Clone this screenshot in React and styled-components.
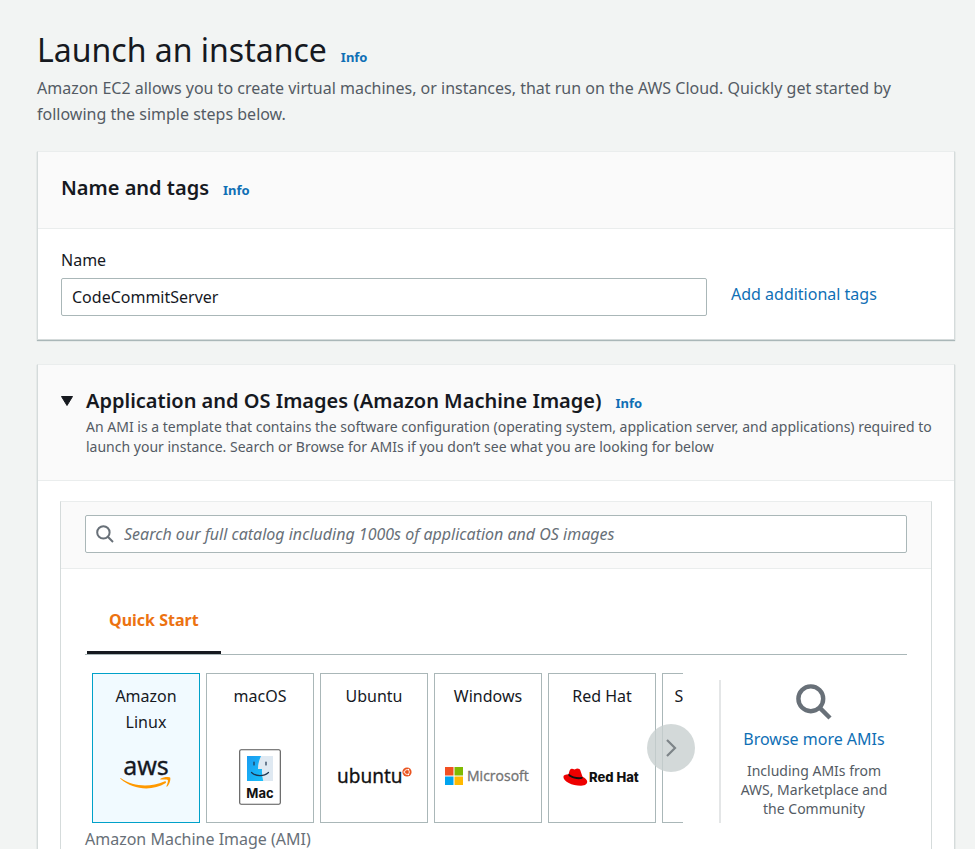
import { useState } from "react";
import styled, { createGlobalStyle, ThemeProvider } from "styled-components";


const theme = {
    bgColor : "#f2f4f3",
    headColor : "#fafafa",
    textColor : "#16191f",
    greyColor : "#545b64",
    mutedColor : "#687078",
    linkColor : "#0f6fb5",
    lineColor : "#eaeded",
    sideColor : "#d5dbdb",
    fieldColor : "#aab7b8",
    orangeColor : "#ec7211",
}

const GlobalStyle = createGlobalStyle`
    * {
        box-sizing : border-box;
    }
    body {
        margin : 0;
        background-color : ${theme.bgColor};
        color : ${theme.textColor};
        font-family : "Noto Sans", "Open Sans", sans-serif;
        font-size : 16px;
        line-height : 26px;
    }
    h1, h2, p {
        margin : 0;
    }
    a {
        color : ${theme.linkColor};
        text-decoration : none;
    }
    button, input {
        font : inherit;
        color : inherit;
    }
`

const Page = styled.main`
    display : flex;
    flex-direction : column;
    gap : 24px;
    padding : 27px 20px 0 37px;
`

const PageHeader = styled.header`
    display : flex;
    flex-direction : column;
    gap : 2px;
`

const TitleRow = styled.div`
    display : flex;
    align-items : baseline;
    gap : 14px;
`

const Title = styled.h1`
    font-size : 32px;
    line-height : 46px;
    font-weight : 400;
`

const SubTitle = styled.h2`
    font-size : 20px;
    line-height : 28px;
    font-weight : 600;
`

const InfoLink = styled.a`
    font-size : 13px;
    line-height : 20px;
    font-weight : 700;
`

const Lead = styled.p`
    color : ${props => props.theme.greyColor};
`

const Card = styled.section`
    background-color : white;
    border : 1px solid ${props => props.theme.sideColor};
    border-top-color : ${props => props.theme.lineColor};
    box-shadow : 0 1px 1px ${props => props.theme.fieldColor};
`

const CardHeader = styled.div`
    display : flex;
    gap : 13px;
    padding : 22px 16px ${props => props.$bottom} 23px;
    background-color : ${props => props.theme.headColor};
    border-bottom : 1px solid ${props => props.theme.lineColor};
`

const CardText = styled.p`
    padding-top : 2px;
    color : ${props => props.theme.greyColor};
    font-size : 14px;
    line-height : 20px;
`

const Toggle = styled.button`
    display : flex;
    align-self : flex-start;
    align-items : center;
    height : 28px;
    padding : 0;
    border : 0;
    background : none;
`

const NameBody = styled.div`
    display : grid;
    grid-template-columns : minmax(0, 1fr) 200px;
    column-gap : 24px;
    align-items : start;
    padding : 18px 23px 23px;
`

const Label = styled.label`
    grid-column : 1 / -1;
    padding-bottom : 5px;
`

const TextInput = styled.input`
    width : 100%;
    height : 38px;
    padding : 0 10px;
    background-color : white;
    border : 1px solid ${props => props.theme.fieldColor};
    border-radius : 2px;
`

const TagsLink = styled.a`
    line-height : 32px;
`

const AmiBody = styled.div`
    padding : 20px 22px 0;
`

const AmiBox = styled.div`
    border : 1px solid ${props => props.theme.sideColor};
    border-top-color : ${props => props.theme.lineColor};
    border-bottom : 0;
`

const SearchBar = styled.div`
    padding : 13px 24px 15px;
    background-color : ${props => props.theme.headColor};
    border-bottom : 1px solid ${props => props.theme.lineColor};
`

const SearchField = styled.label`
    display : flex;
    align-items : center;
    gap : 10px;
    height : 38px;
    padding : 0 10px;
    background-color : white;
    border : 1px solid ${props => props.theme.fieldColor};
    border-radius : 2px;
`

const SearchInput = styled.input`
    flex : 1;
    min-width : 0;
    padding : 0;
    border : 0;
    outline : 0;
    background : none;
    &::placeholder {
        color : ${props => props.theme.mutedColor};
        font-style : italic;
        opacity : 1;
    }
`

const Catalog = styled.div`
    padding : 18px 24px 0;
`

const Tabs = styled.div`
    display : flex;
    padding-left : 2px;
    border-bottom : 1px solid ${props => props.theme.fieldColor};
`

const Tab = styled.button`
    padding : 20px 22px 18px;
    border : 0;
    border-bottom : 3px solid ${props => props.theme.textColor};
    background : none;
    color : ${props => props.theme.orangeColor};
    font-weight : 700;
`

const Picker = styled.div`
    display : flex;
    padding-top : 18px;
`

const TileArea = styled.div`
    position : relative;
    flex : 1;
    min-width : 0;
    margin-right : 36px;
`

const TileStrip = styled.div`
    display : flex;
    gap : 6px;
    padding-left : 7px;
    overflow : hidden;
`

const Tile = styled.button`
    display : flex;
    flex : 0 0 108px;
    flex-direction : column;
    align-items : center;
    justify-content : space-between;
    height : 150px;
    padding : 9px 8px 15px;
    border : 1px solid ${props => props.$selected ? "#00a1c9" : props.theme.fieldColor};
    background-color : ${props => props.$selected ? "#f1faff" : "white"};
`

const TileLogo = styled.span`
    display : flex;
    align-items : center;
    justify-content : center;
    height : 60px;
`

const NextButton = styled.button`
    position : absolute;
    top : 51px;
    right : -12px;
    display : flex;
    align-items : center;
    justify-content : center;
    width : 48px;
    height : 48px;
    padding : 0;
    border : 0;
    border-radius : 50%;
    background-color : rgba(200, 207, 208, 0.8);
`

const Browse = styled.div`
    display : flex;
    flex : 0 0 188px;
    flex-direction : column;
    align-items : center;
    gap : 6px;
    margin-top : 7px;
    padding : 4px 16px 0;
    border-left : 2px solid #e4e6e7;
    text-align : center;
`

const BrowseText = styled.p`
    padding-top : 3px;
    color : ${props => props.theme.greyColor};
    font-size : 14px;
    line-height : 19px;
`

const FieldName = styled.p`
    padding-top : 3px;
    color : ${props => props.theme.mutedColor};
`

const SearchIcon = ({size, stroke}) => (
    <svg width={size} height={size} viewBox="0 0 18 18" fill="none" stroke="#687078" strokeWidth={stroke} aria-hidden="true">
        <circle cx="7.4" cy="7.4" r="6.2"/>
        <path d="M11.8 11.8 17 17"/>
    </svg>
)

const AwsLogo = () => (
    <svg width="56" height="60" viewBox="0 0 56 60" aria-hidden="true">
        <text x="28" y="28" textAnchor="middle" fontFamily="Noto Sans" fontSize="25" fontWeight="400" fill="#16191f" stroke="#16191f" strokeWidth=".3">aws</text>
        <g transform="translate(2 9)">
            <path d="M1 22.2c12.500 8.600 29 9.300 43.300 3.200 1.600-.7 2.600.8 1.100 1.900C32.500 35.200 13 34 .7 23.100c-.7-.7-.4-1.300.3-.9Z" fill="#f90"/>
            <path d="M40.500 22.700c2.700-2.100 8.700-2.200 9.600-1.200.8 1.100-.2 6.800-2.900 9.100-.5.4-1 .1-.7-.5.700-1.700 1.900-5.100 1.300-6-.6-.8-4.600-.7-6.800-.5-.8.1-1-.5-.5-.9Z" fill="#f90"/>
        </g>
    </svg>
)

const MacLogo = () => (
    <svg width="42" height="56" viewBox="0 0 42 56" aria-hidden="true">
        <defs>
            <linearGradient id="finder" x1="0" y1="0" x2="1" y2="1">
                <stop offset="0" stopColor="#1a9bf0"/>
                <stop offset="1" stopColor="#18c0fa"/>
            </linearGradient>
        </defs>
        <rect x=".7" y=".7" width="40.600" height="54.600" rx="1.500" fill="white" stroke="#555" strokeWidth="1.100"/>
        <rect x="8" y="7" width="26" height="25" fill="#dfe9f2"/>
        <path d="M8 7h14c-2 4-3 8-3 13h4c-.2 4 .1 8 1.200 12H8Z" fill="url(#finder)"/>
        <path d="M15 13v3M27 13v3M12.500 23.500c4.500 4.200 12.500 4.200 17 0" fill="none" stroke="#1d3650" strokeWidth="1.200" strokeLinecap="round"/>
        <text x="21" y="49" textAnchor="middle" fontFamily="Inter" fontSize="13" fontWeight="700" fill="#111">Mac</text>
    </svg>
)

const UbuntuLogo = () => (
    <svg width="78" height="30" viewBox="0 0 78 30" aria-hidden="true">
        <text x="2" y="21" fontFamily="Noto Sans" fontSize="19" fontWeight="400" fill="#111" stroke="#111" strokeWidth=".3">ubuntu</text>
        <circle cx="72" cy="10" r="4.600" fill="#e95420"/>
        <circle cx="72" cy="10" r="2.400" fill="none" stroke="white" strokeWidth=".9"/>
        <path d="M72 10h-3.600M72 10l1.900 3.300M72 10l1.900-3.300" stroke="#e95420" strokeWidth=".7"/>
        <circle cx="69.200" cy="10" r=".8" fill="white"/>
        <circle cx="73.400" cy="7.500" r=".8" fill="white"/>
        <circle cx="73.400" cy="12.500" r=".8" fill="white"/>
    </svg>
)

const MicrosoftLogo = () => (
    <svg width="86" height="22" viewBox="0 0 86 22" aria-hidden="true">
        <path d="M0 1h8.500v8.500H0Z" fill="#f25022"/>
        <path d="M9.500 1H18v8.500H9.500Z" fill="#7fba00"/>
        <path d="M0 10.500h8.500V19H0Z" fill="#00a4ef"/>
        <path d="M9.500 10.500H18V19H9.500Z" fill="#ffb900"/>
        <text x="22" y="15" fontFamily="Open Sans" fontSize="14" fontWeight="400" fill="#737373" stroke="#737373" strokeWidth=".3">Microsoft</text>
    </svg>
)

const RedHatLogo = () => (
    <svg width="78" height="20" viewBox="0 0 78 20" aria-hidden="true">
        <path d="M5.600 7.300C2.400 7.500.3 8.200.4 10.100c.3 4.500 8.300 8.700 17.600 8.700 4.700 0 6.300-2.200 6.200-4.200-.1-2-2-3.700-4.700-4.900l-2.200-6.400c-.5-1.300-1-1.600-3.200-1.700-1.100 0-1.600.8-2.700.8-1-.1-1.800-.9-2.900-.6C6.800 2.200 6.500 3.700 5.600 7.300Z" fill="#e00"/>
        <path d="M5.700 6.700c-.5 1.200-.6 2 1.200 3.100 3.600 2.300 9.400 2.900 12 1.900.8-.4.900-.9.600-2-3.200 1.500-10.200.1-13.800-3Z" fill="#111"/>
        <text x="26" y="15" fontFamily="Inter" fontSize="13" fontWeight="800" fill="#111">Red Hat</text>
    </svg>
)


const IMAGES = [
    { name: "Amazon Linux", Logo: AwsLogo },
    { name: "macOS", Logo: MacLogo },
    { name: "Ubuntu", Logo: UbuntuLogo },
    { name: "Windows", Logo: MicrosoftLogo },
    { name: "Red Hat", Logo: RedHatLogo },
    { name: "SUSE Linux", Logo: null },
]


export default () => {
    const [name, setName] = useState("CodeCommitServer");
    const [search, setSearch] = useState("");
    const [image, setImage] = useState("Amazon Linux");
    return (
        <ThemeProvider theme={theme}>
            <GlobalStyle/>
            <Page>
                <PageHeader>
                    <TitleRow>
                        <Title>Launch an instance</Title>
                        <InfoLink href="#">Info</InfoLink>
                    </TitleRow>
                    <Lead>
                        Amazon EC2 allows you to create virtual machines, or instances, that run on the AWS Cloud. Quickly get started by following the simple steps below.
                    </Lead>
                </PageHeader>
                <Card>
                    <CardHeader $bottom="26px">
                        <TitleRow>
                            <SubTitle>Name and tags</SubTitle>
                            <InfoLink href="#">Info</InfoLink>
                        </TitleRow>
                    </CardHeader>
                    <NameBody>
                        <Label htmlFor="name">Name</Label>
                        <TextInput id="name" value={name} onChange={(event) => setName(event.target.value)}/>
                        <TagsLink href="#">Add additional tags</TagsLink>
                    </NameBody>
                </Card>
                <Card>
                    <CardHeader $bottom="23px">
                        <Toggle aria-label="Collapse" aria-expanded="true">
                            <svg width="12" height="10" viewBox="0 0 12 10" aria-hidden="true">
                                <path d="M.5.5h11L6 9.500Z" fill="#16191f" stroke="#16191f" strokeLinejoin="round"/>
                            </svg>
                        </Toggle>
                        <div>
                            <TitleRow>
                                <SubTitle>Application and OS Images (Amazon Machine Image)</SubTitle>
                                <InfoLink href="#">Info</InfoLink>
                            </TitleRow>
                            <CardText>
                                An AMI is a template that contains the software configuration (operating system, application server, and applications) required to launch your instance. Search or Browse for AMIs if you don’t see what you are looking for below
                            </CardText>
                        </div>
                    </CardHeader>
                    <AmiBody>
                        <AmiBox>
                            <SearchBar>
                                <SearchField>
                                    <SearchIcon size={18} stroke={2}/>
                                    <SearchInput
                                        aria-label="Search images"
                                        placeholder="Search our full catalog including 1000s of application and OS images"
                                        value={search}
                                        onChange={(event) => setSearch(event.target.value)}
                                    />
                                </SearchField>
                            </SearchBar>
                            <Catalog>
                                <Tabs role="tablist">
                                    <Tab role="tab" aria-selected="true">Quick Start</Tab>
                                </Tabs>
                                <Picker>
                                    <TileArea>
                                        <TileStrip>
                                            {IMAGES.map(({name, Logo}) => (
                                                <Tile
                                                    key={name}
                                                    $selected={name === image}
                                                    aria-pressed={name === image}
                                                    onClick={() => setImage(name)}
                                                >
                                                    <span>{name}</span>
                                                    <TileLogo>{Logo && <Logo/>}</TileLogo>
                                                </Tile>
                                            ))}
                                        </TileStrip>
                                        <NextButton aria-label="Next">
                                            <svg width="12" height="18" viewBox="0 0 12 18" fill="none" stroke="#7d8488" strokeWidth="2.200" aria-hidden="true">
                                                <path d="m2 1 8 8-8 8"/>
                                            </svg>
                                        </NextButton>
                                    </TileArea>
                                    <Browse>
                                        <SearchIcon size={36} stroke={2.2}/>
                                        <a href="#">Browse more AMIs</a>
                                        <BrowseText>Including AMIs from AWS, Marketplace and the Community</BrowseText>
                                    </Browse>
                                </Picker>
                                <FieldName>Amazon Machine Image (AMI)</FieldName>
                            </Catalog>
                        </AmiBox>
                    </AmiBody>
                </Card>
            </Page>
        </ThemeProvider>
    )
}
